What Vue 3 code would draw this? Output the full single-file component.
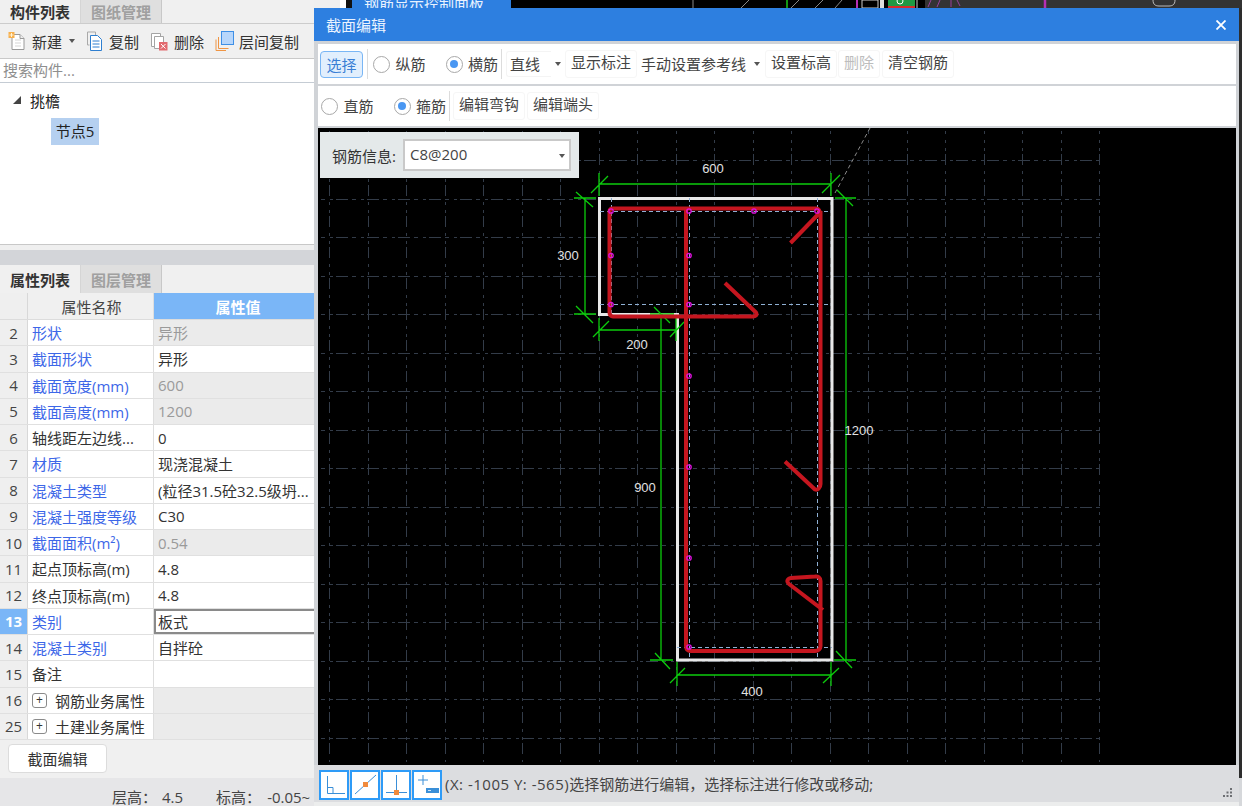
<template>
  <div class="page">
    <!-- 左侧面板 -->
    <aside class="side">
      <div class="tabs">
        <div class="tab active">构件列表</div>
        <div class="tab">图纸管理</div>
      </div>
      <div class="side-tools">
        <span class="tool t-new">
          <svg width="19" height="20" viewBox="0 0 19 20">
            <path d="M4 3.500h8l4 4v11H4z" fill="#fff" stroke="#9a9a9a" />
            <path d="M12 3.500v4h4" fill="#eee" stroke="#9a9a9a" />
            <path d="M7 9h6M7 12h6M7 15h6" stroke="#d5d5d5" />
            <rect x="0.500" y="1" width="6" height="6" fill="#f7b04c" />
            <path d="M1.500 4h4M3.500 2v4" stroke="#fff3d8" />
          </svg>
          新建<i class="caret"></i>
        </span>
        <span class="tool t-copy">
          <svg width="17" height="20" viewBox="0 0 17 20">
            <path d="M1.500 1h8v3" fill="none" stroke="#a9a9a9" />
            <path d="M1.500 1v13h2" fill="none" stroke="#a9a9a9" />
            <path d="M4.500 4.500h7l4 4v11h-11z" fill="#fff" stroke="#2f7fd0" />
            <path d="M6.500 10h7M6.500 13h7M6.500 16h7" stroke="#2f7fd0" />
          </svg>
          复制
        </span>
        <span class="tool t-del">
          <svg width="18" height="19" viewBox="0 0 18 19">
            <path d="M1.500 1.500h9v13h-9z" fill="#fff" stroke="#a4a4a4" />
            <path d="M4.500 4.500h9v12h-9z" fill="#fff" stroke="#a4a4a4" />
            <rect x="9" y="10" width="8.500" height="8.500" fill="#e26a6f" />
            <path d="M11 12l4.500 4.500M15.500 12L11 16.500" stroke="#fff" />
          </svg>
          删除
        </span>
        <span class="tool t-floor">
          <svg width="19" height="20" viewBox="0 0 19 20">
            <path d="M3.500 6v11.500h10" fill="none" stroke="#ef9544" />
            <path d="M1 8.500v11h10" fill="none" stroke="#ef9544" />
            <rect x="6.500" y="0.500" width="12" height="13" fill="#b7d6fb" stroke="#3e8fe6" />
          </svg>
          层间复制
        </span>
      </div>
      <div class="search">搜索构件...</div>
      <div class="tree">
        <div class="tree-root"><i class="tree-arrow"></i>挑檐</div>
        <div class="tree-leaf">节点5</div>
      </div>
      <div class="tree-foot"></div>
      <div class="splitter"></div>
      <div class="tabs second">
        <div class="tab active">属性列表</div>
        <div class="tab">图层管理</div>
      </div>
      <div class="prop-head">
        <div class="c-num"></div>
        <div class="c-name">属性名称</div>
        <div class="c-val">属性值</div>
      </div>
      <div
        v-for="r in rows"
        :key="r.n"
        class="prop-row"
        :class="{ current: r.n === 13 }"
      >
        <div class="c-num">{{ r.n }}</div>
        <div class="c-name" :class="{ link: r.link }">
          <span v-if="r.group" class="plus">+</span>{{ r.name }}
        </div>
        <div class="c-val" :class="{ ro: r.ro, group: r.group, edit: r.n === 13 }">{{ r.val }}</div>
      </div>
      <div class="btn-bar"><button class="edit-btn">截面编辑</button></div>
      <div class="side-status">
        <span class="s1">层高：</span><span class="s2">4.5</span><span class="s3">标高：</span><span class="s4">-0.05~</span>
      </div>
    </aside>

    <!-- 后面主窗口露出的部分 -->
    <div class="behind">
      <div class="behind-top">
        <div class="b-light"></div>
        <div class="b-tab">钢筋显示控制面板</div>
        <svg class="b-draw" width="414" height="8" viewBox="511 0 414 8">
          <rect x="511" y="0" width="414" height="8" fill="#000" />
          <path d="M693 8V0M741 8l8-8M791 8l8-8" stroke="#888" fill="none" />
          <path d="M787 8V0" stroke="#19c819" stroke-width="1.500" />
          <path d="M835 8l7-8M815 8l8-8" stroke="#888" fill="none" />
          <path d="M857 8V0" stroke="#b52fb5" stroke-width="2" />
          <path d="M862 0h16v8h-16z" fill="#000" stroke="#ccc" />
          <rect x="880" y="0" width="4" height="8" fill="#ddd" />
          <rect x="888" y="0" width="27" height="8" fill="#1f9a45" />
          <rect x="888" y="6" width="27" height="2" fill="#d82b2b" />
          <circle cx="900" cy="1" r="3" fill="none" stroke="#fff" />
          <path d="M917 0v8" stroke="#ccc" />
        </svg>
        <div class="b-dark">
          <svg width="317" height="8" viewBox="925 0 317 8">
            <path d="M928 7l3-7M937 7l3-7M951 0v7M957 0l3 6" stroke="#9b3f9b" fill="none" />
            <path d="M1045 0v8" stroke="#b52fb5" stroke-width="2.500" />
            <path d="M1153 0c0 5 3 6 6 6h10c3 0 6-1 6-6" stroke="#bbb" fill="none" />
          </svg>
        </div>
      </div>
      <div class="behind-right"></div>
    </div>

    <!-- 截面编辑窗口 -->
    <section class="dialog">
      <header class="dlg-title">
        <span>截面编辑</span>
        <svg class="dlg-close" width="10" height="10" viewBox="0 0 10 10">
          <path d="M0.500 0.500l9 9M9.500 0.500l-9 9" stroke="#fff" stroke-width="1.800" />
        </svg>
      </header>
      <div class="bar bar1">
        <button class="sel-btn">选择</button>
        <i class="sep s-first"></i>
        <label class="radio r-a"><i class="dot"></i>纵筋</label>
        <label class="radio r-b"><i class="dot on"></i>横筋</label>
        <i class="sep"></i>
        <span class="combo">直线</span><i class="caret c1"></i>
        <span class="flat f-mark">显示标注</span>
        <span class="flat-text">手动设置参考线</span><i class="caret c2"></i>
        <span class="flat f-level">设置标高</span>
        <span class="flat f-del">删除</span>
        <span class="flat f-clear">清空钢筋</span>
      </div>
      <div class="bar bar2">
        <label class="radio r-c"><i class="dot"></i>直筋</label>
        <label class="radio r-d"><i class="dot on"></i>箍筋</label>
        <i class="sep"></i>
        <span class="flat f-hook">编辑弯钩</span>
        <span class="flat f-end">编辑端头</span>
      </div>

      <div class="canvas">
        <svg class="drawing" width="918" height="637" viewBox="318 128 918 637">
          <!-- 网格 -->
          <g stroke="#333c49" stroke-width="1" stroke-dasharray="12 4 4 5 3 3" stroke-dashoffset="16">
            <line v-for="y in gridY" :key="'h' + y" x1="321" :y1="y" x2="1100" :y2="y" />
          </g>
          <g stroke="#333c49" stroke-width="1" stroke-dasharray="11 6 3 5 3 3" stroke-dashoffset="8">
            <line v-for="x in gridX" :key="'v' + x" :x1="x" y1="131" :x2="x" y2="762" />
          </g>
          <path d="M835 193L870 128" stroke="#8a8a8a" stroke-dasharray="4 3" fill="none" />

          <!-- 截面轮廓 -->
          <path
            d="M599.500 198.500H832V660H677.500V314.500H599.500Z"
            fill="none"
            stroke="#e8e8e8"
            stroke-width="3"
          />

          <!-- 参考线 -->
          <g stroke="#8fb0d4" stroke-dasharray="4 3" fill="none">
            <path d="M600 211.500H831M600 304.500H831M677 647.500H832" />
            <path d="M611.500 198V314M689.500 198V660M817.500 198V660" />
          </g>

          <!-- 标注 -->
          <g stroke="#0ccc0c" stroke-width="1.300" fill="none">
            <path d="M599 184H831M599 173V196M831 173V196M591 193L608 176M822 193L840 175" />
            <path d="M846 198V660M835 198H856M834 660H856M837 190L853 206M836 651L852 668" />
            <path d="M585 198V314M574 198H596M574 314H596M576 192L593 207M576 306L593 323" />
            <path d="M599 330H676M599 318V341M676 317V341M593 337L609 321M670 337L684 322" />
            <path d="M661 314V660M650 314H674M650 660H673M654 307L670 323M655 653L670 669" />
            <path d="M677 675H832M677 662V686M831 662V686M670 683L685 668M823 683L839 668" />
          </g>

          <!-- 钢筋 -->
          <g stroke="#c5161f" stroke-width="4" fill="none" stroke-linejoin="round">
            <path d="M790.500 243L819 213.500C820.500 212 819 208.500 816 208.500H612.500C610.500 208.500 609.500 210 609.500 212V312.500C609.500 315 611 316.500 613 316.500H753C755.500 316.500 757.500 315 756 312.500L725 283" />
            <path d="M820.500 211V484C820.500 488 817.500 490.500 815 489.500L785 461.500" />
            <path d="M686 209V646C686 649.500 688 651 691 651H815C818.500 651 820.500 649 820.500 646V581C820.500 577.500 818 576 815 576.500L791 578C787.500 578.500 786 581.500 789 584L823 610" />
          </g>

          <!-- 纵筋点 -->
          <g stroke="#e010e0" stroke-width="1.300" fill="none">
            <circle v-for="p in points" :key="p[0] + '-' + p[1]" :cx="p[0]" :cy="p[1]" r="2.200" />
          </g>

          <g class="dim" fill="#e2e2e2" text-anchor="middle">
            <text x="713" y="173">600</text>
            <text x="568" y="260">300</text>
            <text x="637" y="349">200</text>
            <text x="645" y="492">900</text>
            <text x="859" y="435">1200</text>
            <text x="752" y="696">400</text>
          </g>
        </svg>

        <div class="info">
          <span class="info-label">钢筋信息:</span>
          <div class="info-select">C8@200<i class="caret c3"></i></div>
        </div>
      </div>

      <footer class="dlg-status">
        <button class="snap">
          <svg width="26" height="26" viewBox="0 0 26 26">
            <path d="M6.500 4V21.500H24" fill="none" stroke="#3a8fd8" />
            <path d="M6.500 15.500h5.500v6" fill="none" stroke="#3a8fd8" />
          </svg>
        </button>
        <button class="snap">
          <svg width="26" height="26" viewBox="0 0 26 26">
            <path d="M3 22L24 3" stroke="#3a8fd8" />
            <rect x="11" y="10" width="5" height="5" fill="#f08a3c" />
          </svg>
        </button>
        <button class="snap">
          <svg width="26" height="26" viewBox="0 0 26 26">
            <path d="M13.500 3V20M3 20.500H24" stroke="#3a8fd8" />
            <rect x="11" y="18" width="5" height="5" fill="#f08a3c" />
          </svg>
        </button>
        <button class="snap">
          <svg width="26" height="26" viewBox="0 0 26 26">
            <path d="M9 3v10M4 8h10" stroke="#3a8fd8" />
            <rect x="12" y="16" width="13" height="5" fill="#3a8fd8" />
            <rect x="14" y="18" width="3" height="1" fill="#cfe5f8" />
          </svg>
        </button>
        <span class="coord"><span class="coord-xy">(X: -1005 Y: -565)</span>选择钢筋进行编辑，选择标注进行修改或移动;</span>
        <svg class="grip" width="11" height="11" viewBox="0 0 11 11" fill="#6d6f73">
          <rect x="8" y="0" width="2" height="2" />
          <rect x="4.500" y="3.500" width="2" height="2" />
          <rect x="8" y="3.500" width="2" height="2" />
          <rect x="1" y="7" width="2" height="2" />
          <rect x="4.500" y="7" width="2" height="2" />
          <rect x="8" y="7" width="2" height="2" />
        </svg>
      </footer>
    </section>
  </div>
</template>

<script setup>
const rows = [
  { n: 2, name: '形状', val: '异形', link: true, ro: true },
  { n: 3, name: '截面形状', val: '异形', link: true },
  { n: 4, name: '截面宽度(mm)', val: '600', link: true, ro: true },
  { n: 5, name: '截面高度(mm)', val: '1200', link: true, ro: true },
  { n: 6, name: '轴线距左边线...', val: '0' },
  { n: 7, name: '材质', val: '现浇混凝土', link: true },
  { n: 8, name: '混凝土类型', val: '(粒径31.5砼32.5级坍...', link: true },
  { n: 9, name: '混凝土强度等级', val: 'C30', link: true },
  { n: 10, name: '截面面积(m²)', val: '0.54', link: true, ro: true },
  { n: 11, name: '起点顶标高(m)', val: '4.8' },
  { n: 12, name: '终点顶标高(m)', val: '4.8' },
  { n: 13, name: '类别', val: '板式', link: true },
  { n: 14, name: '混凝土类别', val: '自拌砼', link: true },
  { n: 15, name: '备注', val: '' },
  { n: 16, name: '钢筋业务属性', val: '', group: true },
  { n: 25, name: '土建业务属性', val: '', group: true }
]

// 网格线间距 38.5，取整到像素中心
const gridX = Array.from({ length: 21 }, (_, i) => Math.round(329 + i * 38.5) + 0.5)
const gridY = Array.from({ length: 16 }, (_, i) => Math.round(160 + i * 38.5) + 0.5)

const points = [
  [611, 211], [611, 255.5], [611, 304.5],
  [689, 211], [689, 255.5], [689, 304.5],
  [754, 211], [817, 211], [689, 376],
  [689, 467], [689, 558], [689, 647]
]
</script>

<style>
html, body {
  margin: 0;
  background: #fff;
}
</style>

<style scoped>
.page {
  position: relative;
  display: flex;
  width: 1242px;
  height: 806px;
  overflow: hidden;
  font-family: "Open Sans", "Noto Sans CJK SC", sans-serif;
  font-size: 15px;
  color: #333;
}

.side {
  width: 314px;
  flex-shrink: 0;
  display: flex;
  flex-direction: column;
  background: #fff;
  overflow: hidden;
}

.tabs {
  display: flex;
  height: 24px;
  flex-shrink: 0;
  background: #f0f0f0;
  border-bottom: 1px solid #ccc;
  box-sizing: border-box;
}
.tabs.second {
  height: 28px;
  border-bottom: none;
}
.tab {
  width: 81px;
  display: flex;
  align-items: center;
  justify-content: center;
  box-sizing: border-box;
  background: #dfdfdf;
  border-right: 1px solid #c8c8c8;
  color: #a0a0a0;
  font-weight: 700;
}
.tab.active {
  background: #f0f0f0;
  color: #333;
  border-right: 1px solid #d5d5d5;
}

.side-tools {
  position: relative;
  height: 35px;
  flex-shrink: 0;
  display: flex;
  align-items: center;
  background: #f0f0f0;
  border-bottom: 1px solid #c9c9c9;
  box-sizing: border-box;
}
.tool {
  display: flex;
  align-items: center;
  gap: 5px;
  white-space: nowrap;
}
.t-new { margin-left: 8px; }
.t-copy { margin-left: 11px; gap: 6px; }
.t-del { margin-left: 11px; gap: 6px; }
.t-floor { margin-left: 11px; }
.caret {
  display: inline-block;
  width: 0;
  height: 0;
  border-left: 3.500px solid transparent;
  border-right: 3.500px solid transparent;
  border-top: 4px solid #555;
}
.t-new .caret { margin-left: 2px; }

.search {
  height: 24px;
  flex-shrink: 0;
  box-sizing: border-box;
  padding-left: 3px;
  line-height: 23px;
  color: #8e8e8e;
  background: #fff;
  border-bottom: 1px solid #c5ccd4;
}

.tree {
  height: 162px;
  flex-shrink: 0;
  background: #fff;
  padding-top: 5px;
  box-sizing: border-box;
  border-bottom: 1px solid #c8c8c8;
}
.tree-root {
  display: flex;
  align-items: center;
  height: 24px;
  padding-left: 30px;
  position: relative;
  color: #222;
}
.tree-arrow {
  position: absolute;
  left: 13px;
  top: 8px;
  width: 0;
  height: 0;
  border-left: 8px solid transparent;
  border-bottom: 8px solid #444;
}
.tree-leaf {
  margin: 6px 0 0 51px;
  width: 48px;
  height: 27px;
  line-height: 27px;
  text-align: center;
  background: #b5d0f0;
  color: #222;
}
.tree-foot {
  height: 5px;
  flex-shrink: 0;
  background: #efefef;
}
.splitter {
  height: 15px;
  flex-shrink: 0;
  background: #d3d5d9;
}

.prop-head,
.prop-row {
  display: flex;
  flex-shrink: 0;
  box-sizing: border-box;
}
.prop-head {
  height: 27px;
  background: #f0f0f0;
  border-bottom: 1px solid #dcdcdc;
}
.prop-row {
  height: 26.250px;
  background: #fff;
  border-bottom: 1.500px solid #e0e0e0;
}
.c-num {
  width: 28px;
  flex-shrink: 0;
  box-sizing: border-box;
  display: flex;
  align-items: center;
  justify-content: center;
  background: #efefef;
  border-right: 1px solid #d8d8d8;
  color: #444;
}
.c-name {
  width: 126px;
  flex-shrink: 0;
  box-sizing: border-box;
  display: flex;
  align-items: center;
  padding-left: 4px;
  border-right: 1px solid #dedede;
  white-space: nowrap;
  overflow: hidden;
  color: #333;
}
.c-name.link { color: #3d67e8; }
.c-val {
  flex: 1;
  display: flex;
  align-items: center;
  padding-left: 4px;
  white-space: nowrap;
  box-sizing: border-box;
  color: #333;
}
.c-val.ro {
  background: #ebebeb;
  color: #9a9a9a;
}
.c-val.group { background: #ebebeb; }
.c-val.edit {
  border: 2px solid #8a8a8a;
  border-right: none;
  padding-left: 2px;
}
.prop-head .c-name {
  justify-content: center;
  padding-left: 2px;
  color: #444;
}
.prop-head .c-val {
  justify-content: center;
  padding-left: 8px;
  background: #7ab6f7;
  color: #fff;
  font-weight: 700;
}
.prop-row.current .c-num {
  background: #7ab6f7;
  color: #fff;
  font-weight: 700;
}
.plus {
  width: 15px;
  height: 15px;
  flex-shrink: 0;
  box-sizing: border-box;
  margin-right: 8px;
  border: 1px solid #8a8a8a;
  border-radius: 3px;
  display: flex;
  align-items: center;
  justify-content: center;
  font-size: 12px;
  line-height: 1;
  color: #333;
}

.btn-bar {
  height: 38px;
  flex-shrink: 0;
  box-sizing: border-box;
  padding: 4px 0 0 8px;
  background: #f0f0f0;
}
.edit-btn {
  width: 99px;
  height: 29px;
  padding: 0;
  background: #fff;
  border: 1px solid #dcdcdc;
  border-radius: 4px;
  font: inherit;
  color: #333;
}
.side-status {
  flex: 1;
  display: flex;
  align-items: flex-start;
  padding-top: 9px;
  background: #e6e6e8;
  white-space: nowrap;
  color: #444;
}
.side-status span { line-height: 21px; flex-shrink: 0; }
.s1 { margin-left: 112px; }
.s2 { margin-left: 5px; }
.s3 { margin-left: 33px; }
.s4 { margin-left: 6px; }

.behind {
  flex: 1;
  position: relative;
  background: #d6d8db;
}
.behind-top {
  display: flex;
  height: 8px;
  overflow: hidden;
  background: #000;
}
.b-light {
  width: 38px;
  flex-shrink: 0;
  background: linear-gradient(90deg, #efefef 0 26px, #fff 26px 32px, #111 32px);
}
.b-tab {
  width: 159px;
  flex-shrink: 0;
  height: 8px;
  background: #2d7fe0;
  color: #e8f2ff;
  padding-left: 12px;
  box-sizing: border-box;
  line-height: 7px;
  white-space: nowrap;
  overflow: hidden;
}
.b-draw { display: block; flex-shrink: 0; }
.b-dark {
  flex: 1;
  background: #333;
}
.b-dark svg { display: block; }
.behind-right {
  position: absolute;
  right: 0;
  top: 8px;
  width: 3px;
  height: 770px;
  background: #2d2d2d;
}

.dialog {
  position: absolute;
  left: 314px;
  top: 8px;
  width: 925px;
  height: 798px;
  box-sizing: border-box;
  display: flex;
  flex-direction: column;
  background: #d0d3d7;
}
.dlg-title {
  height: 33px;
  flex-shrink: 0;
  display: flex;
  align-items: center;
  justify-content: space-between;
  padding: 0 13px 0 12px;
  background: #2d7fe0;
  color: #eaf3ff;
}
.dlg-close { display: block; }

.bar {
  flex-shrink: 0;
  margin: 0 3px 2px 4px;
  display: flex;
  align-items: center;
  background: #fff;
  box-sizing: border-box;
  color: #444;
}
.bar1 {
  height: 40px;
  margin-top: 3px;
  padding-left: 2px;
}
.bar2 {
  height: 40px;
  padding-left: 2px;
}
.sel-btn {
  width: 43px;
  height: 27px;
  padding: 0;
  border: 1px solid #79b6f5;
  border-radius: 4px;
  background: #e2effd;
  color: #3a7fd5;
  font: inherit;
  flex-shrink: 0;
}
.sep {
  width: 1px;
  height: 30px;
  background: #dcdcdc;
  margin-left: 3px;
  flex-shrink: 0;
}
.s-first { margin-left: 4px; }
.radio {
  display: flex;
  align-items: center;
  gap: 5.500px;
  padding-bottom: 2px;
  white-space: nowrap;
}
.dot {
  width: 17px;
  height: 17px;
  margin-top: 2px;
  box-sizing: border-box;
  border: 1.500px solid #a8a8a8;
  border-radius: 50%;
  background: #fff;
  position: relative;
}
.dot.on::after {
  content: "";
  position: absolute;
  left: 3px;
  top: 3px;
  width: 8px;
  height: 8px;
  border-radius: 50%;
  background: #4a97f2;
}
.r-a { margin-left: 5px; }
.r-b { margin-left: 20px; }
.r-c { margin-left: 1px; }
.r-d { margin-left: 20px; }
.combo {
  margin-left: 4px;
  width: 45px;
  flex-shrink: 0;
  height: 26px;
  line-height: 24px;
  padding-left: 3px;
  box-sizing: border-box;
  border: 1px solid #f4f4f4;
  border-right: none;
  border-radius: 3px 0 0 3px;
}
.c1 { margin-left: 4px; }
.c2 { margin-left: 8px; }
.flat {
  height: 26px;
  line-height: 23px;
  padding: 0 5px;
  white-space: nowrap;
  border: 1px solid #f6f6f6;
  border-radius: 3px;
}
.flat-text { margin-left: 4px; padding-bottom: 2px; white-space: nowrap; }
.f-mark { margin-left: 4px; }
.f-level { margin-left: 5px; }
.f-del { margin-left: 1px; color: #bdbdbd; }
.f-clear { margin-left: 2px; }
.f-hook { margin-left: 3px; }
.f-end { margin-left: 2px; }

.canvas {
  position: relative;
  margin: 0 3px 0 4px;
  height: 637px;
  flex-shrink: 0;
  background: #000;
}
.drawing { display: block; }
.dim text {
  font-family: "Liberation Sans", sans-serif;
  font-size: 13px;
}
.info {
  position: absolute;
  left: 2px;
  top: 4px;
  width: 259px;
  height: 46px;
  box-sizing: border-box;
  display: flex;
  align-items: center;
  padding-left: 12px;
  background: #e4e9ea;
  color: #333;
}
.info-label { width: 71px; flex-shrink: 0; white-space: nowrap; }
.info-select {
  position: relative;
  width: 168px;
  height: 32px;
  box-sizing: border-box;
  border: 2px solid #c9c9c9;
  background: #fff;
  padding-left: 5px;
  line-height: 27px;
  color: #444;
}
.c3 {
  position: absolute;
  right: 4px;
  top: 13px;
}

.dlg-status {
  position: relative;
  flex: 1;
  padding: 5px 0 0 5px;
  box-sizing: border-box;
  display: flex;
  align-items: flex-start;
  gap: 1px;
  background: linear-gradient(#dcdde0 0 37px, #eceded 37px);
}
.snap {
  width: 30px;
  height: 30px;
  padding: 0;
  box-sizing: border-box;
  border: 2px solid #2e9bf7;
  background: #fff;
  display: flex;
  align-items: center;
  justify-content: center;
  flex-shrink: 0;
}
.coord {
  margin-left: 2px;
  line-height: 28px;
  white-space: nowrap;
  color: #444;
}
.coord-xy { letter-spacing: 0.5px; }
.grip {
  position: absolute;
  right: 6px;
  bottom: 7px;
}
</style>
